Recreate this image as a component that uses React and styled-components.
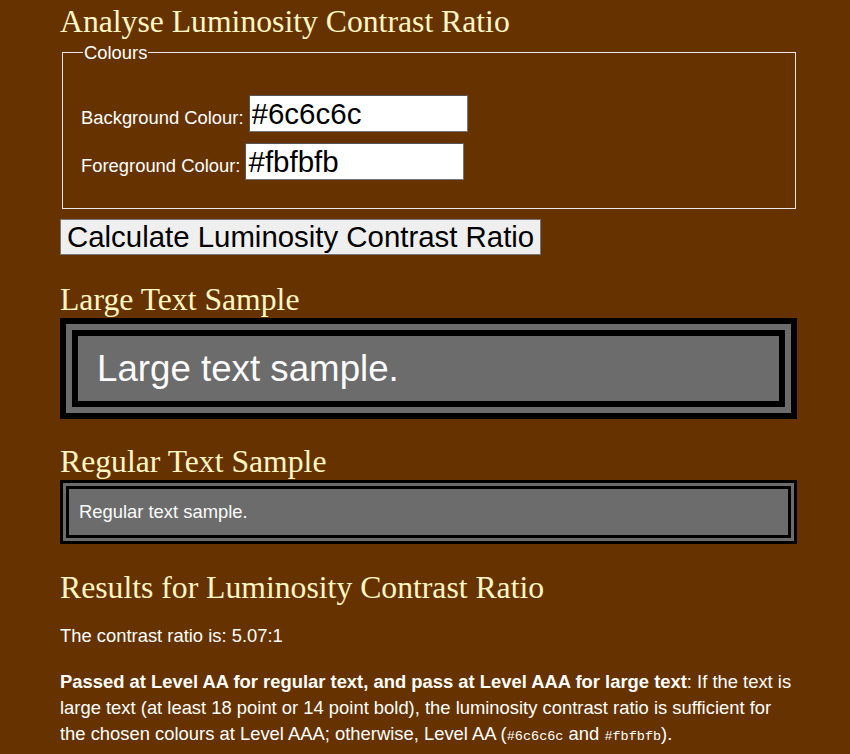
import React from "react";
import styled, { createGlobalStyle } from "styled-components";

const GlobalStyle = createGlobalStyle`
  html, body {
    margin: 0;
    padding: 0;
    background: #663300;
  }
  body {
    font-family: "Liberation Sans", Arial, sans-serif;
    font-size: 18.4px;
    color: #ffffff;
  }
`;

const Page = styled.main`
  width: 737px;
  margin-left: 60px;
  padding-top: 4px;
  padding-bottom: 20px;
`;

const Heading = styled.h2`
  font-family: "Liberation Serif", "Times New Roman", serif;
  font-weight: normal;
  font-size: 31.7px;
  line-height: 36px;
  color: #fff6c4;
  margin: ${(p) => p.$top || 0}px 0 0 0;
`;

const Fieldset = styled.fieldset`
  margin: 2px 1px 0 2px;
  padding: 0 12px 28px 18px;
  border: 1px solid #e8e8e8;
`;

const Legend = styled.legend`
  padding: 0 1px;
  margin-left: 2px;
  font-size: 18.4px;
  line-height: 21px;
`;

const Rows = styled.div`
  display: flex;
  flex-direction: column;
  gap: 11px;
  padding-top: 32px;
`;

const Row = styled.div`
  display: flex;
  align-items: baseline;
  gap: 5px;
`;

const Label = styled.label`
  font-size: 18.4px;
`;

const ColourInput = styled.input`
  width: 219px;
  height: 37px;
  box-sizing: border-box;
  padding: 0 2px;
  border: 1px solid #767676;
  border-top-color: #555;
  border-left-color: #555;
  font-family: "Liberation Sans", Arial, sans-serif;
  font-size: 29.5px;
  color: #000;
  background: #fff;
`;

const CalcButton = styled.button`
  margin-top: 10px;
  height: 36px;
  padding: 0 6px;
  border: 1px solid #767676;
  background: #efefef;
  font-family: "Liberation Sans", Arial, sans-serif;
  font-size: 29.4px;
  color: #000;
  cursor: pointer;
`;

const Sample = styled.div`
  background: #6c6c6c;
  color: #fbfbfb;
  border: ${(p) => (p.$large ? 18 : 9)}px double #000;
  padding: ${(p) => (p.$large ? "12px 19px" : "12px 10px 13px")};
  font-size: ${(p) => (p.$large ? 36.7 : 18.4)}px;
  line-height: ${(p) => (p.$large ? 41 : 21)}px;
`;

const Para = styled.p`
  margin: ${(p) => p.$top || 0}px 0 0 0;
  line-height: 26px;
`;

const Code = styled.code`
  font-family: "Liberation Mono", "DejaVu Sans Mono", monospace;
  font-size: 13.5px;
`;

export default function App() {
  const bg = "#6c6c6c";
  const fg = "#fbfbfb";

  return (
    <>
      <GlobalStyle />
      <Page>
        <Heading as="h1">Analyse Luminosity Contrast Ratio</Heading>
        <Fieldset>
          <Legend>Colours</Legend>
          <Rows>
            <Row>
              <Label htmlFor="bg">Background Colour:</Label>
              <ColourInput id="bg" defaultValue={bg} />
            </Row>
            <Row>
              <Label htmlFor="fg">Foreground Colour:</Label>
              <ColourInput id="fg" defaultValue={fg} />
            </Row>
          </Rows>
        </Fieldset>
        <CalcButton type="button">Calculate Luminosity Contrast Ratio</CalcButton>

        <Heading $top={27}>Large Text Sample</Heading>
        <Sample $large>Large text sample.</Sample>

        <Heading $top={25}>Regular Text Sample</Heading>
        <Sample>Regular text sample.</Sample>

        <Heading $top={26}>Results for Luminosity Contrast Ratio</Heading>
        <Para $top={17}>The contrast ratio is: 5.07:1</Para>
        <Para $top={20}>
          <strong>
            Passed at Level AA for regular text, and pass at Level AAA for large
            text
          </strong>
          : If the text is large text (at least 18 point or 14 point bold), the
          luminosity contrast ratio is sufficient for the chosen colours at
          Level AAA; otherwise, Level AA (<Code>{bg}</Code> and{" "}
          <Code>{fg}</Code>).
        </Para>
      </Page>
    </>
  );
}
